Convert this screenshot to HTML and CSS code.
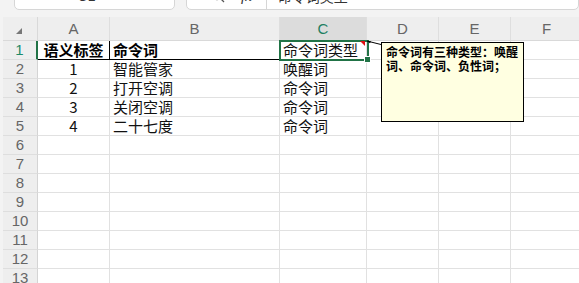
FILE: index.html
```html
<!DOCTYPE html>
<html lang="zh-CN">
<head>
  <meta charset="UTF-8">
  <title>语义标签 - 表格</title>
  <link rel="stylesheet" href="styles.css">
</head>
<body>

<div class="toolbar">
  <div class="name-box">C1</div>
  <div class="formula-box">
    <svg class="icon-search" width="14" height="14" viewBox="0 0 14 14">
      <circle cx="6" cy="6" r="4.5" fill="none" stroke="#555" stroke-width="1.3"/>
      <line x1="9.3" y1="9.3" x2="13" y2="13" stroke="#555" stroke-width="1.3"/>
    </svg>
    <span class="fx">fx</span>
    <span class="formula-text">命令词类型</span>
  </div>
</div>

<div class="sheet">
  <div class="grid">
    <div class="corner"><span class="corner-mark"></span></div>
    <div class="col-head">A</div>
    <div class="col-head">B</div>
    <div class="col-head active">C</div>
    <div class="col-head">D</div>
    <div class="col-head">E</div>
    <div class="col-head">F</div>

    <div class="row-head active">1</div>
    <div class="cell bold center edge-b edge-r">语义标签</div>
    <div class="cell bold edge-b">命令词</div>
    <div class="cell selected edge-b">命令词类型<span class="note-mark"></span><span class="handle"></span></div>
    <div class="cell"></div>
    <div class="cell"></div>
    <div class="cell"></div>

    <div class="row-head">2</div>
    <div class="cell center">1</div>
    <div class="cell">智能管家</div>
    <div class="cell">唤醒词</div>
    <div class="cell"></div>
    <div class="cell"></div>
    <div class="cell"></div>

    <div class="row-head">3</div>
    <div class="cell center">2</div>
    <div class="cell">打开空调</div>
    <div class="cell">命令词</div>
    <div class="cell"></div>
    <div class="cell"></div>
    <div class="cell"></div>

    <div class="row-head">4</div>
    <div class="cell center">3</div>
    <div class="cell">关闭空调</div>
    <div class="cell">命令词</div>
    <div class="cell"></div>
    <div class="cell"></div>
    <div class="cell"></div>

    <div class="row-head">5</div>
    <div class="cell center">4</div>
    <div class="cell">二十七度</div>
    <div class="cell">命令词</div>
    <div class="cell"></div>
    <div class="cell"></div>
    <div class="cell"></div>

    <div class="row-head">6</div>
    <div class="cell"></div><div class="cell"></div><div class="cell"></div><div class="cell"></div><div class="cell"></div><div class="cell"></div>
    <div class="row-head">7</div>
    <div class="cell"></div><div class="cell"></div><div class="cell"></div><div class="cell"></div><div class="cell"></div><div class="cell"></div>
    <div class="row-head">8</div>
    <div class="cell"></div><div class="cell"></div><div class="cell"></div><div class="cell"></div><div class="cell"></div><div class="cell"></div>
    <div class="row-head">9</div>
    <div class="cell"></div><div class="cell"></div><div class="cell"></div><div class="cell"></div><div class="cell"></div><div class="cell"></div>
    <div class="row-head">10</div>
    <div class="cell"></div><div class="cell"></div><div class="cell"></div><div class="cell"></div><div class="cell"></div><div class="cell"></div>
    <div class="row-head">11</div>
    <div class="cell"></div><div class="cell"></div><div class="cell"></div><div class="cell"></div><div class="cell"></div><div class="cell"></div>
    <div class="row-head">12</div>
    <div class="cell"></div><div class="cell"></div><div class="cell"></div><div class="cell"></div><div class="cell"></div><div class="cell"></div>
    <div class="row-head">13</div>
    <div class="cell"></div><div class="cell"></div><div class="cell"></div><div class="cell"></div><div class="cell"></div><div class="cell"></div>
  </div>

  <svg class="note-line" width="16" height="6" viewBox="0 0 16 6">
    <line x1="1" y1="1" x2="15" y2="4.5" stroke="#000" stroke-width="1"/>
    <path d="M1 1 L5 1.2 L4 3.2 Z" fill="#000"/>
  </svg>
  <div class="comment">命令词有三种类型：唤醒词、命令词、负性词；</div>
</div>

</body>
</html>
```

FILE: styles.css
```css
body {
  margin: 0;
  background: #f3f3f3;
  font-family: "Noto Sans CJK SC", "Liberation Sans", sans-serif;
  overflow: hidden;
}

.toolbar {
  height: 17px;
  display: flex;
  align-items: flex-start;
  overflow: hidden;
}

.name-box,
.formula-box {
  height: 28px;
  margin-top: -18px;
  background: #fff;
  border: 1px solid #d6d6d6;
  border-radius: 5px;
  box-sizing: border-box;
  display: flex;
  align-items: center;
  font-size: 14px;
  color: #333;
}

.name-box {
  margin-left: 14px;
  width: 161px;
  justify-content: center;
  padding-right: 16px;
  font-family: "Liberation Sans", sans-serif;
}

.formula-box {
  margin-left: 11px;
  flex: 1;
}

.icon-search {
  margin-left: 24px;
}

.fx {
  margin-left: 16px;
  font-family: "Liberation Serif", serif;
  font-style: italic;
  font-size: 15px;
  padding-right: 14px;
  border-right: 1px solid #d6d6d6;
  height: 28px;
  line-height: 28px;
}

.formula-text {
  margin-left: 11px;
}

.sheet {
  position: relative;
  padding-left: 3px;
}

.grid {
  display: grid;
  grid-template-columns: 35px 72px 170px 87px 72px 72px 72px;
  grid-template-rows: 24px;
  grid-auto-rows: 19px;
  background: #fff;
}

.corner,
.col-head,
.row-head {
  background: #eeeeee;
  box-sizing: border-box;
  color: #666;
  font-family: "Liberation Sans", sans-serif;
  font-size: 15px;
  text-align: center;
}

.corner {
  position: relative;
  border-bottom: 1px solid #d9d9d9;
  border-right: 1px solid #d9d9d9;
}

.corner-mark {
  position: absolute;
  left: 13px;
  top: 11px;
  width: 0;
  height: 0;
  border-left: 6px solid transparent;
  border-bottom: 6px solid #777;
}

.col-head {
  line-height: 23px;
  border-bottom: 1px solid #d9d9d9;
  border-right: 1px solid #dedede;
}

.col-head.active {
  background: #dcdcdc;
  color: #1e7f62;
}

.row-head {
  line-height: 18px;
  border-bottom: 1px solid #dedede;
  border-right: 1px solid #d4d4d4;
}

.row-head.active {
  color: #1e8a68;
  border-right: 2px solid #217346;
}

.cell {
  box-sizing: border-box;
  border-right: 1px solid #e1e1e1;
  border-bottom: 1px solid #e1e1e1;
  padding: 0 3px;
  font-size: 15px;
  line-height: 18px;
  color: #111;
  white-space: nowrap;
  overflow: hidden;
}

.bold {
  font-weight: bold;
  color: #000;
}

.center {
  text-align: center;
}

.edge-b {
  border-bottom-color: #000;
}

.edge-r {
  border-right-color: #000;
}

.selected {
  position: relative;
  overflow: visible;
}

.selected::after {
  content: "";
  position: absolute;
  left: -1px;
  top: -1px;
  width: 90px;
  height: 21px;
  border: 2px solid #217346;
  box-sizing: border-box;
}

.note-mark {
  position: absolute;
  right: 1px;
  top: 0;
  width: 0;
  height: 0;
  border-left: 5px solid transparent;
  border-top: 5px solid #e01010;
  z-index: 1;
}

.handle {
  position: absolute;
  left: 84px;
  top: 15px;
  width: 5px;
  height: 5px;
  background: #217346;
  border: 1px solid #fff;
  z-index: 2;
}

.note-line {
  position: absolute;
  left: 366px;
  top: 23px;
}

.comment {
  position: absolute;
  left: 381px;
  top: 25px;
  width: 143px;
  height: 80px;
  box-sizing: border-box;
  background: #ffffe1;
  border: 1px solid #000;
  padding: 2px 4px 0;
  font-size: 12px;
  font-weight: bold;
  line-height: 14px;
  color: #000;
}
```
